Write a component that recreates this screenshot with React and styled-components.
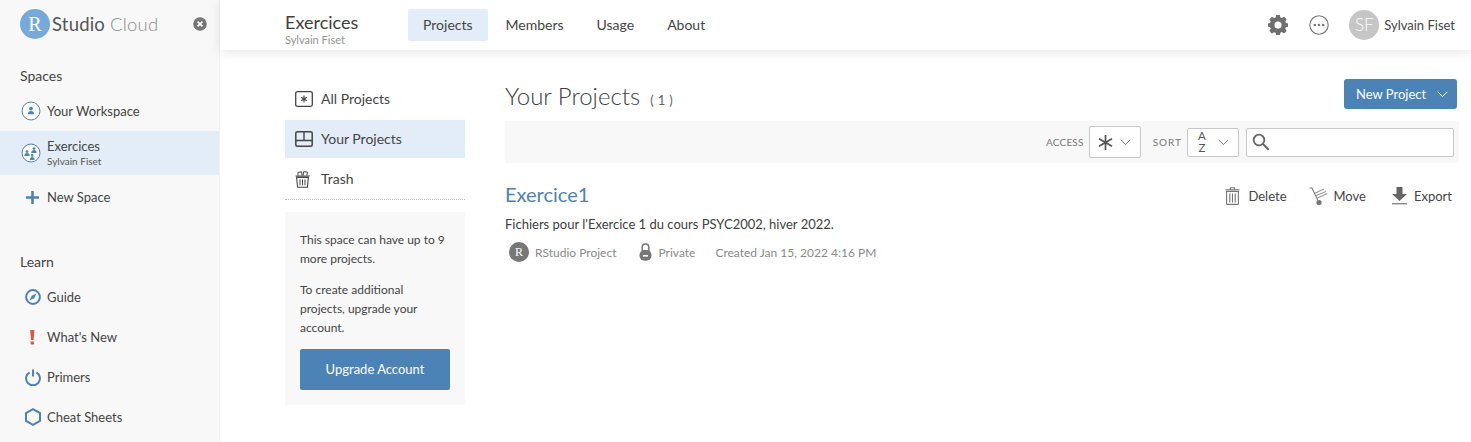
import React from "react";
import styled, { createGlobalStyle } from "styled-components";

const BLUE = "#4c83b6";
const DARK = "#404040";

const GlobalStyle = createGlobalStyle`
  html, body { margin: 0; padding: 0; height: 100%; background: #fff; overflow: hidden; }
  body { font-family: Lato, "Liberation Sans", sans-serif; color: ${DARK}; }
  #root { height: 100%; }
`;

// Icons
const Gear = () => (
  <svg width="20" height="20" viewBox="0 0 22 22">
    <path
      fill="#6f6f6f"
      fillRule="evenodd"
      d="M9 0h4l.6 2.7 1.7.7 2.4-1.5 2.8 2.8-1.5 2.4.7 1.7L22 9.4v3.4l-2.3.6-.7 1.7 1.5 2.4-2.8 2.8-2.4-1.5-1.7.7L13 22H9l-.6-2.4-1.7-.7-2.4 1.5-2.8-2.8 1.5-2.4-.7-1.7L0 12.8V9.4l2.3-.6.7-1.7-1.5-2.4 2.8-2.8 2.4 1.5 1.7-.7zM11 7.2a3.9 3.9 0 1 0 0 7.8 3.9 3.9 0 0 0 0-7.8z"
    />
  </svg>
);

const Dots = () => (
  <svg width="20" height="20" viewBox="0 0 20 20">
    <circle cx="10" cy="10" r="9.2" fill="none" stroke="#777" strokeWidth="1.1" />
    <circle cx="5.8" cy="10" r="1.3" fill="#777" />
    <circle cx="10" cy="10" r="1.3" fill="#777" />
    <circle cx="14.2" cy="10" r="1.3" fill="#777" />
  </svg>
);

const Chevron = ({ color = "#777" }) => (
  <svg width="11" height="7" viewBox="0 0 11 7">
    <path d="M.7.8 5.5 5.6 10.3.8" fill="none" stroke={color} strokeWidth="1" />
  </svg>
);

const WorkspaceIcon = () => (
  <svg width="20" height="20" viewBox="0 0 20 20">
    <circle cx="10" cy="10" r="9" fill="#fff" stroke={BLUE} strokeWidth="1" />
    <circle cx="10" cy="7.6" r="1.9" fill={BLUE} />
    <path d="M6.8 13.2c0-2.2 1.2-3.2 3.2-3.2s3.2 1 3.2 3.2z" fill={BLUE} />
  </svg>
);

const SpaceIcon = () => (
  <svg width="20" height="20" viewBox="0 0 20 20">
    <circle cx="10" cy="10" r="9" fill="#fff" stroke={BLUE} strokeWidth="1" />
    <circle cx="6" cy="8.6" r="1.4" fill={BLUE} />
    <path d="M3.4 13c0-2 1-2.9 2.6-2.9s2.6.9 2.6 2.9z" fill={BLUE} />
    <circle cx="13" cy="5.6" r="1.4" fill={BLUE} />
    <path d="M10.4 10c0-2 1-2.9 2.6-2.9s2.6.9 2.6 2.9z" fill={BLUE} />
    <circle cx="11.2" cy="12.4" r="1.3" fill={BLUE} />
    <path d="M8.8 17c0-2 .9-3 2.4-3s2.4 1 2.4 3z" fill={BLUE} />
  </svg>
);

const PlusIcon = () => (
  <svg width="13" height="13" viewBox="0 0 13 13">
    <path d="M5.2 0h2.6v5.2H13v2.6H7.8V13H5.2V7.8H0V5.2h5.2z" fill={BLUE} />
  </svg>
);

const CompassIcon = () => (
  <svg width="16" height="16" viewBox="0 0 16 16">
    <circle cx="8" cy="8" r="6.9" fill="none" stroke={BLUE} strokeWidth="2" />
    <path d="M11.4 4.6 9.3 9.3 4.6 11.4 6.7 6.7z" fill={BLUE} />
  </svg>
);

const BangIcon = () => (
  <svg width="5" height="15" viewBox="0 0 5 15">
    <path d="M.2 0h4.2L3.6 10H1z" fill="#e8503f" />
    <rect x="0.6" y="11.4" width="3.4" height="3.2" rx="0.6" fill="#e8503f" />
  </svg>
);

const PowerIcon = () => (
  <svg width="16" height="17" viewBox="0 0 16 17">
    <path d="M4.6 3.4a6.9 6.9 0 1 0 6.8 0" fill="none" stroke={BLUE} strokeWidth="2" />
    <path d="M8 .5v7" fill="none" stroke={BLUE} strokeWidth="2" />
  </svg>
);

const HexIcon = () => (
  <svg width="16" height="18" viewBox="0 0 16 18">
    <path d="M8 1.2 15 5v8l-7 3.8L1 13V5z" fill="none" stroke={BLUE} strokeWidth="2" />
  </svg>
);

const AllIcon = () => (
  <svg width="18" height="16" viewBox="0 0 18 16">
    <rect x="0.7" y="0.7" width="16.6" height="14.6" rx="1.5" fill="none" stroke="#444" strokeWidth="1.3" />
    <path d="M9 4.6v6.8M6.1 6.3l5.8 3.4M11.9 6.3 6.1 9.7" stroke="#444" strokeWidth="1.2" />
  </svg>
);

const PanelIcon = () => (
  <svg width="18" height="16" viewBox="0 0 18 16">
    <rect x="0.8" y="0.8" width="16.4" height="14.4" rx="1.5" fill="none" stroke="#444" strokeWidth="1.5" />
    <path d="M1 9.5h16M9 1v8.5" stroke="#444" strokeWidth="1.4" />
  </svg>
);

const FullTrashIcon = () => (
  <svg width="15" height="18" viewBox="0 0 15 18">
    <path d="M1.6 7.4h11.8l-1 9.8H2.6zM.6 6h13.8" fill="none" stroke="#444" strokeWidth="1.1" />
    <path d="M5 9.4v6M7.5 9.4v6M10 9.4v6" stroke="#444" strokeWidth="1" />
    <path d="M3 5.6V2.4l3.6-.6.5 3.8M8 5.4 8.8 1.6l3.8.6-.8 3.4" fill="none" stroke="#444" strokeWidth="1" />
  </svg>
);

const TrashIcon = () => (
  <svg width="15" height="18" viewBox="0 0 15 18">
    <path d="M1.6 4.4h11.8v12a1 1 0 0 1-1 1H2.6a1 1 0 0 1-1-1zM.4 2.8h14.2M5.4 2.4V.8h4.2v1.6" fill="none" stroke="#777" strokeWidth="1.1" />
    <path d="M4.8 6.4v9M7.5 6.4v9M10.2 6.4v9" stroke="#777" strokeWidth="1.1" />
  </svg>
);

const DollyIcon = () => (
  <svg width="19" height="19" viewBox="0 0 19 19">
    <path d="M.5 1h2.4L9 13.4" fill="none" stroke="#777" strokeWidth="1.1" />
    <path d="M6 6.2 15 2M7.2 8.6 17 4.4M8.4 11l10-4.4" stroke="#999" strokeWidth="1.1" />
    <circle cx="10" cy="15.6" r="2.6" fill="#777" />
  </svg>
);

const ExportIcon = () => (
  <svg width="15" height="18" viewBox="0 0 15 18">
    <path d="M4.5 0h6v7H15L7.5 14 0 7h4.5z" fill="#666" />
    <rect y="16" width="15" height="1.4" fill="#888" />
  </svg>
);

const SearchIcon = () => (
  <svg width="18" height="18" viewBox="0 0 19 19">
    <circle cx="7.4" cy="7.4" r="5.6" fill="none" stroke="#666" strokeWidth="1.9" />
    <path d="m11.6 11.6 6 6" stroke="#666" strokeWidth="2.2" />
  </svg>
);

const StarGlyph = () => (
  <svg width="15" height="15" viewBox="0 0 15 15">
    <path d="M7.5 0v15M1 3.7l13 7.6M14 3.7 1 11.3" stroke="#555" strokeWidth="1.7" />
  </svg>
);

const LockIcon = () => (
  <svg width="13" height="18" viewBox="0 0 13 18">
    <path d="M3.2 8V4.2a3.3 3.3 0 0 1 6.6 0V8" fill="none" stroke="#777" strokeWidth="1.5" />
    <rect x="0.5" y="7" width="12" height="10.8" rx="5" fill="#777" />
    <rect x="4" y="12" width="5" height="1.6" fill="#fff" />
  </svg>
);

const CloseIcon = () => (
  <svg width="14" height="14" viewBox="0 0 14 14">
    <circle cx="7" cy="7" r="6.8" fill="#777" />
    <path d="m4.6 4.6 4.8 4.8M9.4 4.6 4.6 9.4" stroke="#fff" strokeWidth="1.7" />
  </svg>
);

const Page = styled.div`
  display: flex;
  height: 442px;
  overflow: hidden;
`;

const Sidebar = styled.aside`
  flex: 0 0 219px;
  background: #f8f8f8;
  border-right: 1px solid #f1f1f1;
`;

const Brand = styled.div`
  display: flex;
  align-items: center;
  height: 48px;
  padding: 0 12px 0 20px;
`;

const LogoBall = styled.div`
  width: 30px;
  height: 30px;
  border-radius: 50%;
  background: #75aadb;
  color: #fff;
  font: 20px/30px "Liberation Serif", serif;
  text-align: center;
`;

const LogoText = styled.div`
  margin-left: 2px;
  font-size: 18.5px;
  letter-spacing: 0.2px;
  color: #555;
  flex: 1;

  span {
    color: #8c8c8c;
    font-weight: 300;
  }
`;

const CloseSlot = styled.div`
  display: flex;
`;

const SectionLabel = styled.div`
  padding: 0 20px;
  font-size: 14px;
  line-height: 18px;
  color: #444;
  margin-top: ${(p) => p.$top}px;
`;

const SideItem = styled.div`
  display: flex;
  align-items: center;
  height: ${(p) => p.$height || 40}px;
  margin-top: ${(p) => p.$top || 0}px;
  background: ${(p) => (p.$active ? "#e3edf7" : "transparent")};
  font-size: 13px;
  color: #444;
`;

const SideIconSlot = styled.div`
  width: 47px;
  flex: none;
  padding-left: ${(p) => (p.$inset ? 24 : 21)}px;
  box-sizing: border-box;
  padding-right: 6px;
  display: flex;
  justify-content: center;
`;

const SideSub = styled.div`
  margin-top: 2px;
  font-size: 10px;
  line-height: 11px;
  color: #555;
`;

const SideTitle = styled.div`
  line-height: 15px;
`;

const Column = styled.div`
  flex: 1;
  min-width: 0;
  display: flex;
  flex-direction: column;
`;

const Header = styled.header`
  display: flex;
  align-items: center;
  height: 50px;
  flex: none;
  padding: 0 16px 0 65px;
  background: #fff;
  box-shadow: 0 2px 12px rgba(0, 0, 0, 0.1);
`;

const SpaceName = styled.div`
  width: 123px;
  padding-top: 7px;
`;

const SpaceTitle = styled.div`
  font-size: 18px;
  line-height: 20px;
  color: #404040;
`;

const SpaceOwner = styled.div`
  margin-top: 2px;
  font-size: 11px;
  line-height: 12px;
  color: #949494;
`;

const Tabs = styled.nav`
  display: flex;
  flex: 1;
  gap: 3px;
`;

const Tab = styled.div`
  padding: 0 15px;
  height: 32px;
  line-height: 32px;
  font-size: 14px;
  border-radius: 2px;
  color: #444;
  background: ${(p) => (p.$active ? "#e3edf7" : "transparent")};
`;

const HeaderTools = styled.div`
  display: flex;
  align-items: center;
`;

const ToolSlot = styled.div`
  display: flex;
  margin-right: ${(p) => p.$gap}px;
`;

const Avatar = styled.div`
  width: 30px;
  height: 30px;
  border-radius: 50%;
  background: #c6c6c6;
  color: #fff;
  font-size: 17px;
  line-height: 30px;
  text-align: center;
  font-weight: 300;
`;

const UserName = styled.div`
  margin-left: 5px;
  font-size: 13px;
  color: #444;
`;

const Body = styled.div`
  display: flex;
  flex: 1;
  padding: 29px 14px 0 65px;
`;

const LeftNav = styled.div`
  flex: 0 0 180px;
  margin-right: 40px;
  padding-top: 1px;
`;

const NavList = styled.div`
  border-bottom: 1px dotted #bdbdbd;
`;

const NavItem = styled.div`
  display: flex;
  align-items: center;
  height: 38px;
  box-sizing: border-box;
  margin-bottom: 2px;
  padding: 0 0 1px 10px;
  font-size: 14px;
  color: #444;
  background: ${(p) => (p.$active ? "#e3edf7" : "transparent")};

  &:last-child {
    margin-bottom: 1px;
  }
`;

const NavIconSlot = styled.div`
  width: 26px;
  display: flex;
`;

const Notice = styled.div`
  margin-top: 12px;
  padding: 18px 15px 15px;
  background: #f8f8f8;
  font-size: 12px;
  line-height: 19px;
  color: #444;

  p {
    margin: 0 0 12px;
  }
`;

const UpgradeButton = styled.div`
  height: 41px;
  margin-top: 12px;
  background: ${BLUE};
  border-radius: 2px;
  color: #fff;
  font-size: 13px;
  line-height: 41px;
  text-align: center;
`;

const Content = styled.div`
  flex: 1;
  min-width: 0;
`;

const TitleRow = styled.div`
  display: flex;
  align-items: flex-start;
  justify-content: space-between;
  height: 42px;
`;

const PageTitle = styled.h1`
  margin: 0;
  font-size: 24px;
  line-height: 34px;
  font-weight: 300;
  color: #404040;

  span {
    margin-left: 10px;
    font-size: 13px;
    letter-spacing: 4px;
    color: #666;
    font-weight: 400;
  }
`;

const NewButton = styled.div`
  display: flex;
  align-items: center;
  justify-content: space-between;
  width: 113px;
  height: 30px;
  box-sizing: border-box;
  padding: 0 9px 0 12px;
  background: ${BLUE};
  border-radius: 3px;
  color: #fff;
  font-size: 13px;
`;

const Filters = styled.div`
  display: flex;
  align-items: center;
  justify-content: flex-end;
  height: 42px;
  margin-right: -2px;
  padding-right: 5px;
  background: #f8f8f8;
`;

const FilterLabel = styled.div`
  margin: 0 ${(p) => p.$after}px 0 ${(p) => p.$left}px;
  font-size: 10px;
  letter-spacing: ${(p) => p.$spacing}px;
  color: #777;
`;

const Picker = styled.div`
  display: flex;
  align-items: center;
  justify-content: space-between;
  width: 52px;
  height: ${(p) => p.$height}px;
  box-sizing: border-box;
  padding: 0 9px 0 ${(p) => p.$left}px;
  background: #fff;
  border: 1px solid #c8c8c8;
  border-radius: 2px;
`;

const AzGlyph = styled.div`
  font-size: 11.5px;
  line-height: 12px;
  color: #555;
  text-align: center;
`;

const SearchBox = styled.div`
  display: flex;
  align-items: center;
  width: 208px;
  height: 29px;
  box-sizing: border-box;
  margin-left: 7px;
  padding-left: 5px;
  background: #fff;
  border: 1px solid #c8c8c8;
  border-radius: 2px;
`;

const ProjectRow = styled.div`
  display: flex;
  align-items: center;
  justify-content: space-between;
  margin-top: 18px;
  height: 26px;
`;

const ProjectName = styled.div`
  font-size: 20px;
  color: ${BLUE};
`;

const Actions = styled.div`
  display: flex;
  align-items: center;
  margin-top: 4px;
  padding-right: 5px;
`;

const Action = styled.div`
  display: flex;
  align-items: center;
  gap: ${(p) => p.$gap}px;
  margin-left: ${(p) => p.$left || 0}px;
  font-size: 13px;
  color: #444;
`;

const Description = styled.div`
  margin-top: 8px;
  font-size: 13px;
  line-height: 18px;
  color: #404040;
`;

const Meta = styled.div`
  display: flex;
  align-items: center;
  margin-top: 9px;
  padding-left: 4px;
  font-size: 12px;
  color: #8a8a8a;
`;

const MetaItem = styled.div`
  display: flex;
  align-items: center;
  gap: ${(p) => p.$gap || 0}px;
  margin-right: ${(p) => p.$right || 0}px;
`;

const RBadge = styled.div`
  width: 20px;
  height: 20px;
  border-radius: 50%;
  background: #777;
  color: #fff;
  font: 12px/20px "Liberation Serif", serif;
  text-align: center;
`;

export default function App() {
  return (
    <>
      <GlobalStyle />
      <Page>
        <Sidebar>
          <Brand>
            <LogoBall>R</LogoBall>
            <LogoText>
              Studio <span>Cloud</span>
            </LogoText>
            <CloseSlot>
              <CloseIcon />
            </CloseSlot>
          </Brand>
          <SectionLabel $top={19}>Spaces</SectionLabel>
          <SideItem $top={6}>
            <SideIconSlot><WorkspaceIcon /></SideIconSlot>
            <SideTitle>Your Workspace</SideTitle>
          </SideItem>
          <SideItem $height={44} $active>
            <SideIconSlot><SpaceIcon /></SideIconSlot>
            <div>
              <SideTitle>Exercices</SideTitle>
              <SideSub>Sylvain Fiset</SideSub>
            </div>
          </SideItem>
          <SideItem $height={44}>
            <SideIconSlot $inset><PlusIcon /></SideIconSlot>
            <SideTitle>New Space</SideTitle>
          </SideItem>
          <SectionLabel $top={34}>Learn</SectionLabel>
          <SideItem $top={6}>
            <SideIconSlot $inset><CompassIcon /></SideIconSlot>
            <SideTitle>Guide</SideTitle>
          </SideItem>
          <SideItem>
            <SideIconSlot $inset><BangIcon /></SideIconSlot>
            <SideTitle>What's New</SideTitle>
          </SideItem>
          <SideItem>
            <SideIconSlot $inset><PowerIcon /></SideIconSlot>
            <SideTitle>Primers</SideTitle>
          </SideItem>
          <SideItem>
            <SideIconSlot $inset><HexIcon /></SideIconSlot>
            <SideTitle>Cheat Sheets</SideTitle>
          </SideItem>
        </Sidebar>
        <Column>
          <Header>
            <SpaceName>
              <SpaceTitle>Exercices</SpaceTitle>
              <SpaceOwner>Sylvain Fiset</SpaceOwner>
            </SpaceName>
            <Tabs>
              <Tab $active>Projects</Tab>
              <Tab>Members</Tab>
              <Tab>Usage</Tab>
              <Tab>About</Tab>
            </Tabs>
            <HeaderTools>
              <ToolSlot $gap={21}><Gear /></ToolSlot>
              <ToolSlot $gap={20}><Dots /></ToolSlot>
              <Avatar>SF</Avatar>
              <UserName>Sylvain Fiset</UserName>
            </HeaderTools>
          </Header>
          <Body>
            <LeftNav>
              <NavList>
                <NavItem><NavIconSlot><AllIcon /></NavIconSlot>All Projects</NavItem>
                <NavItem $active><NavIconSlot><PanelIcon /></NavIconSlot>Your Projects</NavItem>
                <NavItem><NavIconSlot><FullTrashIcon /></NavIconSlot>Trash</NavItem>
              </NavList>
              <Notice>
                <p>This space can have up to 9 more projects.</p>
                <p>To create additional projects, upgrade your account.</p>
                <UpgradeButton>Upgrade Account</UpgradeButton>
              </Notice>
            </LeftNav>
            <Content>
              <TitleRow>
                <PageTitle>Your Projects<span>(1)</span></PageTitle>
                <NewButton>New Project <Chevron color="#fff" /></NewButton>
              </TitleRow>
              <Filters>
                <FilterLabel $left={0} $after={5} $spacing={0.2}>ACCESS</FilterLabel>
                <Picker $height={32} $left={8}><StarGlyph /><Chevron /></Picker>
                <FilterLabel $left={12} $after={5} $spacing={1}>SORT</FilterLabel>
                <Picker $height={29} $left={10}><AzGlyph>A<br />Z</AzGlyph><Chevron /></Picker>
                <SearchBox><SearchIcon /></SearchBox>
              </Filters>
              <ProjectRow>
                <ProjectName>Exercice1</ProjectName>
                <Actions>
                  <Action $gap={8}><TrashIcon />Delete</Action>
                  <Action $gap={6} $left={22}><DollyIcon />Move</Action>
                  <Action $gap={7} $left={26}><ExportIcon />Export</Action>
                </Actions>
              </ProjectRow>
              <Description>Fichiers pour l'Exercice 1 du cours PSYC2002, hiver 2022.</Description>
              <Meta>
                <MetaItem $gap={6} $right={22}><RBadge>R</RBadge>RStudio Project</MetaItem>
                <MetaItem $gap={7} $right={20}><LockIcon />Private</MetaItem>
                <MetaItem>Created Jan 15, 2022 4:16 PM</MetaItem>
              </Meta>
            </Content>
          </Body>
        </Column>
      </Page>
    </>
  );
}
